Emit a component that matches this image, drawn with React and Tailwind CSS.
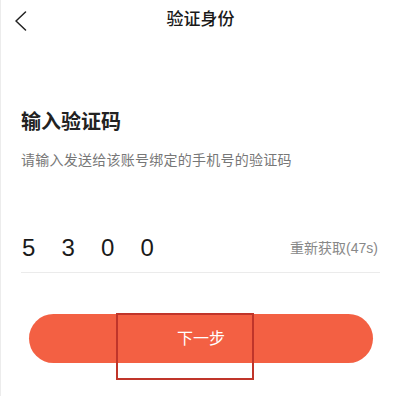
const digits = ['5', '3', '0', '0'];

export default function App() {
  return (
    <div
      className="relative w-[400px] h-[396px] bg-white border-l border-[#ececec] overflow-hidden"
      style={{ fontFamily: '"Liberation Sans", "Noto Sans CJK SC", sans-serif' }}
    >
      {/* header */}
      <div className="h-10 grid grid-cols-[1fr_auto_1fr] items-center">
        <div className="pl-[13px] pt-[1px]">
          <svg width="14" height="20" viewBox="0 0 14 20" fill="none">
            <polyline points="11.5,1 2,10 11.5,19" stroke="#222" strokeWidth="1.5" strokeLinecap="round" strokeLinejoin="round" />
          </svg>
        </div>
        <div className="text-[17px] font-medium text-[#1a1a1a] leading-6">验证身份</div>
        <div />
      </div>

      <div className="px-5">
        <h1 className="mt-[68px] text-[20px] leading-7 font-semibold text-[#222]">输入验证码</h1>
        <p className="mt-[14px] text-[14px] tracking-[0.25px] leading-5 text-[#777]">请输入发送给该账号绑定的手机号的验证码</p>

        <div className="mt-[58px] flex items-center justify-between h-10 pb-1 box-content border-b border-[#ebebeb]">
          <div className="flex text-[24px] text-[#1a1a1a]">
            {digits.map((d, i) => (
              <span key={i} className="w-[39.5px] pl-[1px]">{d}</span>
            ))}
          </div>
          <span className="text-[14px] text-[#888] pr-[2px]">重新获取(47s)</span>
        </div>
      </div>

      <button className="mt-[41px] mx-7 w-[344px] h-[49px] rounded-full bg-[#f36043] text-white text-[16px] flex items-center justify-center">
        下一步
      </button>

      {/* annotation box */}
      <div className="absolute left-[115px] top-[313px] w-[138px] h-[67px] border-2 border-[#c0352a]" />
    </div>
  );
}
